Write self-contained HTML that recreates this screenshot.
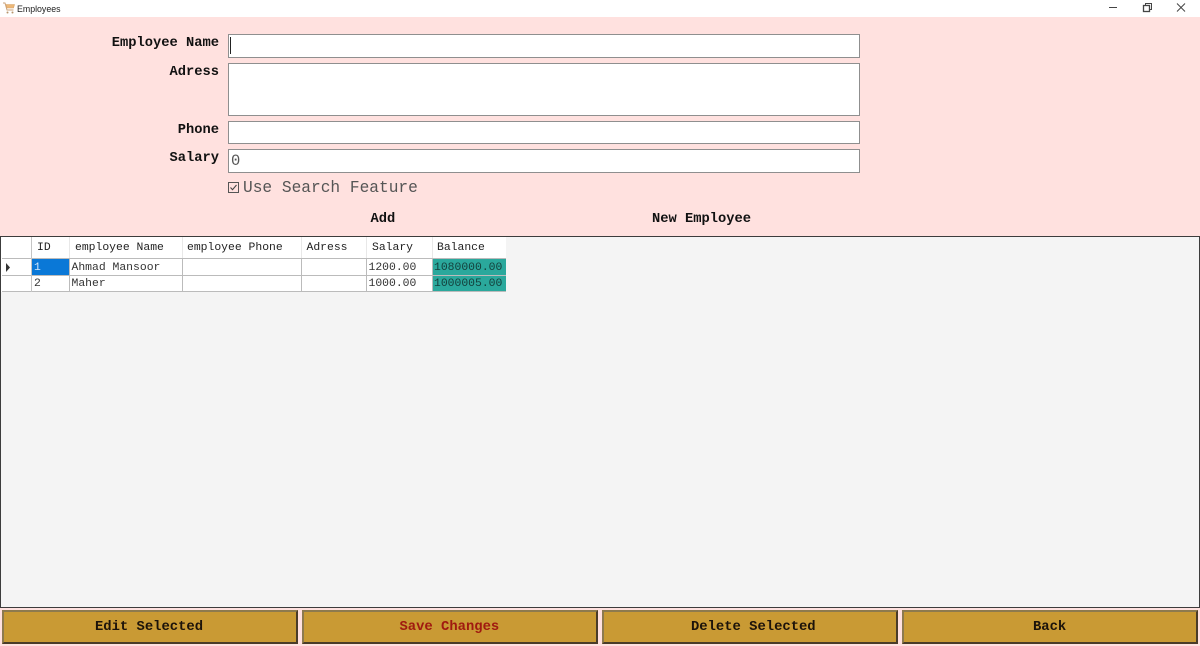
<!DOCTYPE html>
<html><head><meta charset="utf-8"><style>
html,body{margin:0;padding:0;background:#ffe1df}
#p{position:relative;width:1200px;height:646px;overflow:hidden;background:#ffe1df;font-family:"Liberation Mono",monospace;color:#111}
#p>*{position:absolute;box-sizing:border-box}
.t{white-space:pre;line-height:16px}
.l{font-weight:bold;font-size:13.75px;right:981px;text-align:right}
.i{background:#fff;border:1px solid #8f8f8f;left:228px;width:632px}
.c{white-space:pre;font-size:11.4px;line-height:16px;color:#333}
.h{font-size:11.4px;line-height:16px;color:#222;white-space:pre}
.v{background:#bbb;width:1px;top:258px;height:34px}
.hl{background:#bbb;height:1px;left:2px;width:504px}
.b{top:610px;height:34px;width:296px;background:#c99a34;border:2px solid;border-color:#8d7a4e #4a3c28 #4a3c28 #8d7a4e}
.bt{top:619px;font-weight:bold;font-size:13.85px;line-height:16px;color:#1c130a;white-space:pre}
</style></head><body><div id="p">
<div style="left:0;top:0;width:1200px;height:17px;background:#fff"></div>
<svg style="left:2px;top:1px" width="14" height="14" viewBox="0 0 14 14" fill="none"><path d="M1 2h2l2 7h6.500" stroke="#c9a27a" stroke-width="1"/><path d="M4 3.500h8.500l-1 3.500H5z" fill="#edb878" stroke="#d8a468" stroke-width=".6"/><circle cx="5.500" cy="11.500" r="1" fill="#b8946a"/><circle cx="10.500" cy="11.500" r="1" fill="#b8946a"/></svg>
<div class="t" style="left:17px;top:0;font:8.8px/18px 'Liberation Sans',sans-serif;color:#222">Employees</div>
<svg style="left:1100px;top:0" width="100" height="17" viewBox="0 0 100 17" fill="none" stroke="#444"><path d="M9 7.500h8"/><rect x="43.500" y="5.500" width="6" height="6" stroke-width="1.300"/><path d="M45.500 5V3.500H51.500V9.500H50" stroke-width="1"/><path d="M77 3.500l8 8M85 3.500l-8 8"/></svg>

<div class="t l" style="top:36px">Employee Name</div>
<div class="t l" style="top:65px">Adress</div>
<div class="t l" style="top:123px">Phone</div>
<div class="t l" style="top:151px">Salary</div>

<div class="i" style="top:34px;height:24px"></div>
<div style="left:230px;top:37px;width:1px;height:17px;background:#222"></div>
<div class="i" style="top:63px;height:53px"></div>
<div class="i" style="top:121px;height:23px"></div>
<div class="i" style="top:149px;height:24px"></div>
<div class="t" style="left:231px;top:153px;font-size:15.500px;line-height:17px;color:#555">0</div>

<svg style="left:228px;top:182px" width="11" height="11" viewBox="0 0 11 11" fill="none"><rect x=".5" y=".5" width="10" height="10" stroke="#555"/><path d="M2.500 5.500l2 2.200L8.500 3" stroke="#444" stroke-width="1.100"/></svg>
<div class="t" style="left:243px;top:179.500px;font-size:16.2px;color:#555">Use Search Feature</div>

<div class="t" style="left:370.500px;top:212px;font-weight:bold;font-size:13.75px">Add</div>
<div class="t" style="left:652px;top:212px;font-weight:bold;font-size:13.75px">New Employee</div>

<div style="left:0;top:236px;width:1200px;height:372px;background:#f4f4f4;border:1px solid #3c3c3c"></div>
<div style="left:1px;top:237px;width:505px;height:21px;background:#fff"></div>
<div style="left:1px;top:258px;width:30px;height:34px;background:#fff"></div>
<div style="left:31px;top:258px;width:475px;height:34px;background:#fff"></div>
<div style="left:32px;top:259px;width:37px;height:16px;background:#0a78d7"></div>
<div style="left:432px;top:258px;width:74px;height:34px;background:#2aa89c"></div>
<div class="hl" style="top:258px"></div><div class="hl" style="top:275px"></div><div class="hl" style="top:291px"></div>
<div class="v" style="left:31px;top:237px;height:55px;background:#c4c4c4"></div>
<div class="v" style="left:69px"></div><div class="v" style="left:181.500px"></div><div class="v" style="left:301px"></div><div class="v" style="left:366px"></div><div class="v" style="left:432px"></div>
<div class="v" style="left:69px;top:237px;height:21px;background:#e8e8e8"></div><div class="v" style="left:181.500px;top:237px;height:21px;background:#e8e8e8"></div><div class="v" style="left:301px;top:237px;height:21px;background:#e8e8e8"></div><div class="v" style="left:366px;top:237px;height:21px;background:#e8e8e8"></div><div class="v" style="left:432px;top:237px;height:21px;background:#e8e8e8"></div>
<svg style="left:5px;top:263px" width="6" height="9" viewBox="0 0 6 9"><path d="M1 0l4 4.500L1 9z" fill="#333"/></svg>

<div class="h" style="left:37px;top:240px">ID</div>
<div class="h" style="left:75px;top:240px">employee Name</div>
<div class="h" style="left:187px;top:240px">employee Phone</div>
<div class="h" style="left:306.500px;top:240px">Adress</div>
<div class="h" style="left:372px;top:240px">Salary</div>
<div class="h" style="left:437px;top:240px">Balance</div>

<div class="c" style="left:34px;top:260px;color:#cfe6fa">1</div>
<div class="c" style="left:71.500px;top:260px">Ahmad Mansoor</div>
<div class="c" style="left:368.500px;top:260px">1200.00</div>
<div class="c" style="left:434px;top:260px;color:#14403c">1080000.00</div>
<div class="c" style="left:34px;top:276px">2</div>
<div class="c" style="left:71.500px;top:276px">Maher</div>
<div class="c" style="left:368.500px;top:276px">1000.00</div>
<div class="c" style="left:434px;top:276px;color:#14403c">1000005.00</div>

<div class="b" style="left:2px"></div>
<div class="b" style="left:302px"></div>
<div class="b" style="left:602px"></div>
<div class="b" style="left:902px"></div>
<div class="bt" style="left:95px">Edit Selected</div>
<div class="bt" style="left:399.500px;color:#a01a10">Save Changes</div>
<div class="bt" style="left:691px">Delete Selected</div>
<div class="bt" style="left:1033px">Back</div>
</div></body></html>
